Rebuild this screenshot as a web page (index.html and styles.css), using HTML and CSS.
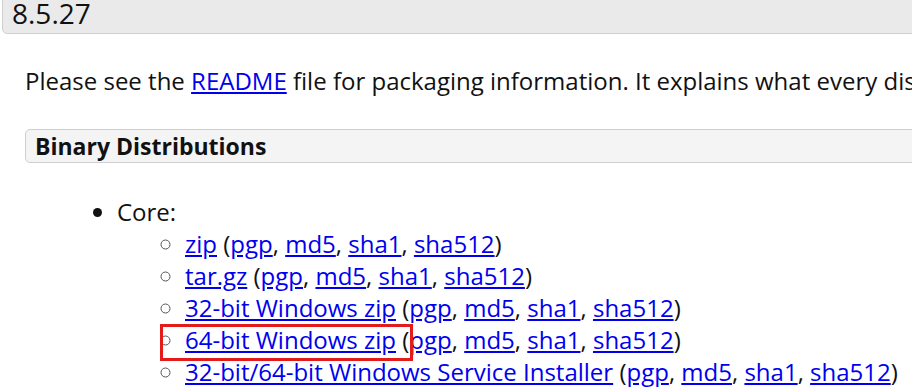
FILE: index.html
```html
<!DOCTYPE html>
<html lang="en">
<head>
  <meta charset="UTF-8">
  <title>Apache Tomcat 8.5.27</title>
  <link rel="stylesheet" href="styles.css">
</head>
<body>
  <h3 class="version">8.5.27</h3>
  <div class="section">
    <p>Please see the <a href="#">README</a> file for packaging information. It explains what every distribution contains.</p>
    <h4 class="subhead">Binary Distributions</h4>
    <ul class="dist">
      <li>Core:
        <ul class="files">
          <li><a href="#">zip</a> (<a href="#">pgp</a>, <a href="#">md5</a>, <a href="#">sha1</a>, <a href="#">sha512</a>)</li>
          <li><a href="#">tar.gz</a> (<a href="#">pgp</a>, <a href="#">md5</a>, <a href="#">sha1</a>, <a href="#">sha512</a>)</li>
          <li><a href="#">32-bit Windows zip</a> (<a href="#">pgp</a>, <a href="#">md5</a>, <a href="#">sha1</a>, <a href="#">sha512</a>)</li>
          <li class="marked"><a href="#">64-bit Windows zip</a> (<a href="#">pgp</a>, <a href="#">md5</a>, <a href="#">sha1</a>, <a href="#">sha512</a>)<span class="highlight"></span></li>
          <li><a href="#">32-bit/64-bit Windows Service Installer</a> (<a href="#">pgp</a>, <a href="#">md5</a>, <a href="#">sha1</a>, <a href="#">sha512</a>)</li>
        </ul>
      </li>
    </ul>
  </div>
</body>
</html>
```

FILE: styles.css
```css
html, body {
    overflow: hidden;
}
body {
    margin: 0;
    font-family: "Open Sans", Arial, sans-serif;
    font-size: 24px;
    line-height: 33px;
    color: #111;
    background: #fff;
    white-space: nowrap;
}
a {
    color: #0000ee;
}
.version {
    width: 1400px;
    margin: -7px 0 0 2px;
    padding: 0 9px;
    font-size: 28px;
    font-weight: normal;
    line-height: 39px;
    background: #eaeaea;
    border: 1px solid #cfcfcf;
    border-radius: 5px;
}
.section {
    padding-left: 25px;
}
.section p {
    margin: 30px 0 32px;
}
.subhead {
    width: 1400px;
    margin: 0;
    padding: 0 9px;
    font-size: 23px;
    font-weight: bold;
    line-height: 32px;
    background: #f4f4f4;
    border: 1px solid #cfcfcf;
    border-radius: 5px;
}
.dist {
    margin: 33px 0 0;
    padding-left: 92px;
    line-height: 32px;
}
.files {
    margin: 0;
    padding-left: 68px;
    list-style: circle;
}
.files li::marker {
    color: #555;
}
.marked {
    position: relative;
}
.highlight {
    position: absolute;
    left: -25px;
    top: 0;
    width: 247px;
    height: 31px;
    border: 3px solid #e31b1b;
}
```
